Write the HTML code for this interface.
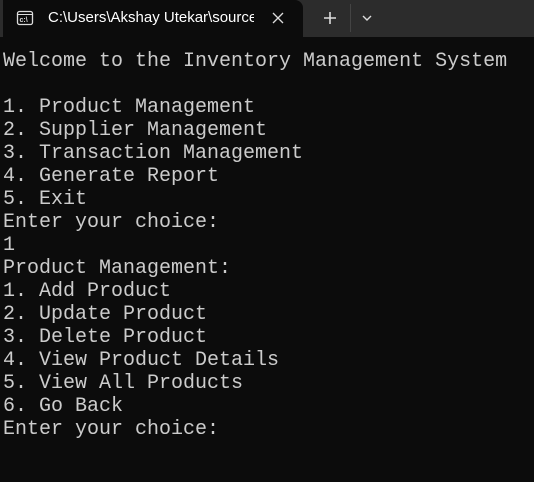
<!DOCTYPE html>
<html><head><style>
html,body{margin:0;padding:0;width:534px;height:482px;overflow:hidden;background:#0c0c0c;}
.bar{position:absolute;left:0;top:0;width:534px;height:37px;background:#2c2c2c;}
.tab{position:absolute;left:3px;top:0;width:300px;height:37px;background:#0c0c0c;border-radius:0 8px 0 0;}
.ttl{position:absolute;left:48px;top:9px;font:15px "Liberation Sans",sans-serif;color:#fff;white-space:nowrap;width:206px;overflow:hidden;}
pre{position:absolute;left:3px;top:50px;margin:0;font:20px/23px "Liberation Mono",monospace;color:#cccccc;}
</style></head><body>
<div class="bar"></div>
<div class="tab"></div>
<svg style="position:absolute;left:0;top:0" width="534" height="37">
<rect x="17.5" y="11.5" width="15" height="13" rx="2" fill="none" stroke="#ddd" stroke-width="1.3"/>
<line x1="18" y1="14.5" x2="32" y2="14.5" stroke="#ddd" stroke-width="1"/>
<text x="19.5" y="22" font-family="Liberation Sans" font-size="7" font-weight="bold" fill="#ddd">c:\</text>
<path d="M273 13l10 10M283 13l-10 10" stroke="#ddd" stroke-width="1.3"/>
<path d="M330 12v12M324 18h12" stroke="#ddd" stroke-width="1.6"/>
<line x1="350.5" y1="4" x2="350.5" y2="32" stroke="#444"/>
<path d="M363 16l4 4 4-4" stroke="#ddd" stroke-width="1.4" fill="none"/>
</svg>
<div class="ttl">C:\Users\Akshay Utekar\source</div>
<pre>Welcome to the Inventory Management System

1. Product Management
2. Supplier Management
3. Transaction Management
4. Generate Report
5. Exit
Enter your choice:
1
Product Management:
1. Add Product
2. Update Product
3. Delete Product
4. View Product Details
5. View All Products
6. Go Back
Enter your choice:</pre>
</body></html>
